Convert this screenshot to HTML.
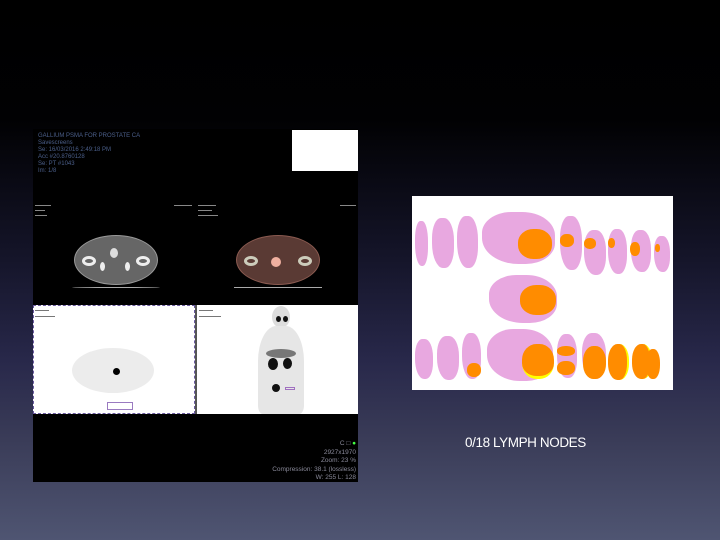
<!DOCTYPE html>
<html><head><meta charset="utf-8"><style>
*{margin:0;padding:0;box-sizing:border-box}
body{width:720px;height:540px;overflow:hidden;position:relative;font-family:"Liberation Sans",sans-serif;
background:linear-gradient(to bottom,#000 0px,#010103 120px,#15152a 260px,#28284a 360px,#3a3c58 440px,#4f5572 540px);}
.a{position:absolute}
.ct{position:absolute;border-radius:50%}
.txt{color:#4b5f8a;font-size:6px;line-height:7px;white-space:nowrap}
.sm{position:absolute;background:#888;height:1px}
.pk{position:absolute;background:#e8a8e0;border-radius:40% 45% 40% 50%}
.or{position:absolute;background:#ff8c00;border-radius:45%}
</style></head><body>
<div class="a" style="left:33px;top:129px;width:325px;height:353px;background:#000"></div>
<div class="a txt" style="left:38px;top:133px">GALLIUM PSMA FOR PROSTATE CA<br>Savescreens<br>Se: 16/03/2016 2:49:18 PM<br>Acc #20.8760128<br>Se: PT #1043<br>Im: 1/8</div>
<div class="a" style="left:292px;top:130px;width:66px;height:41px;background:#fff"></div>
<div class="ct" style="left:74px;top:235px;width:84px;height:50px;background:#666;border:1px solid #999"></div>
<div class="ct" style="left:82px;top:256px;width:14px;height:10px;border:3px solid #eee"></div>
<div class="ct" style="left:136px;top:256px;width:14px;height:10px;border:3px solid #eee"></div>
<div class="ct" style="left:110px;top:248px;width:8px;height:10px;background:#ddd"></div>
<div class="ct" style="left:100px;top:262px;width:5px;height:9px;background:#eee"></div>
<div class="ct" style="left:125px;top:262px;width:5px;height:9px;background:#eee"></div>
<div class="a" style="left:72px;top:287px;width:88px;height:1px;background:#aaa;border-radius:50%"></div>
<div class="ct" style="left:236px;top:235px;width:84px;height:50px;background:#5a3a34;border:1px solid #8a5a50"></div>
<div class="ct" style="left:244px;top:256px;width:14px;height:10px;border:3px solid #ccb"></div>
<div class="ct" style="left:298px;top:256px;width:14px;height:10px;border:3px solid #ccb"></div>
<div class="ct" style="left:271px;top:257px;width:10px;height:10px;background:#f0b0a0"></div>
<div class="a" style="left:234px;top:287px;width:88px;height:1px;background:#aaa"></div>
<div class="a" style="left:33px;top:305px;width:162px;height:109px;background:#fff;border:1px dashed #6a5aa0"></div>
<div class="a" style="left:197px;top:305px;width:161px;height:109px;background:#fff"></div>
<div class="a" style="left:195px;top:305px;width:2px;height:109px;background:#555"></div>
<div class="ct" style="left:72px;top:348px;width:82px;height:45px;background:#ececec"></div>
<div class="ct" style="left:113px;top:368px;width:7px;height:7px;background:#000"></div>
<div class="a" style="left:107px;top:402px;width:26px;height:8px;border:1px solid #9a7ac0"></div>
<div class="ct" style="left:272px;top:306px;width:18px;height:22px;background:#ddd"></div>
<div class="a" style="left:258px;top:326px;width:46px;height:88px;background:#e6e6e6;border-radius:40% 40% 10% 10%"></div>
<div class="ct" style="left:276px;top:316px;width:5px;height:6px;background:#111"></div>
<div class="ct" style="left:283px;top:316px;width:5px;height:6px;background:#111"></div>
<div class="ct" style="left:266px;top:349px;width:30px;height:9px;background:#777"></div>
<div class="ct" style="left:268px;top:358px;width:10px;height:12px;background:#111"></div>
<div class="ct" style="left:283px;top:358px;width:9px;height:11px;background:#111"></div>
<div class="ct" style="left:272px;top:384px;width:8px;height:8px;background:#111"></div>
<div class="a" style="left:285px;top:387px;width:10px;height:3px;border:1px solid #a070c0"></div>
<div class="sm" style="left:35px;top:205px;width:16px"></div><div class="sm" style="left:35px;top:210px;width:10px"></div><div class="sm" style="left:35px;top:215px;width:12px"></div>
<div class="sm" style="left:198px;top:205px;width:18px"></div><div class="sm" style="left:198px;top:210px;width:14px"></div><div class="sm" style="left:198px;top:215px;width:20px"></div>
<div class="sm" style="left:174px;top:205px;width:18px"></div><div class="sm" style="left:340px;top:205px;width:16px"></div>
<div class="sm" style="left:35px;top:310px;width:14px;background:#777"></div><div class="sm" style="left:35px;top:316px;width:20px;background:#777"></div>
<div class="sm" style="left:199px;top:310px;width:14px;background:#777"></div><div class="sm" style="left:199px;top:316px;width:22px;background:#777"></div>
<div class="a txt" style="right:364px;top:440px;text-align:right;color:#8a8a9a;line-height:8.5px;font-size:6.5px">C &#9633; <span style="color:#4f4">&#9679;</span><br>2927x1970<br>Zoom: 23 %<br>Compression: 38.1 (lossless)<br>W: 255 L: 128</div>
<div class="a" style="left:412px;top:196px;width:261px;height:194px;background:#fff;overflow:hidden">
<div class="pk" style="left:3px;top:25px;width:13px;height:45px"></div>
<div class="pk" style="left:20px;top:22px;width:22px;height:50px"></div>
<div class="pk" style="left:45px;top:20px;width:21px;height:52px"></div>
<div class="pk" style="left:70px;top:16px;width:73px;height:52px"></div>
<div class="or" style="left:106px;top:33px;width:34px;height:30px"></div>
<div class="pk" style="left:148px;top:20px;width:22px;height:54px"></div>
<div class="or" style="left:148px;top:38px;width:14px;height:13px"></div>
<div class="pk" style="left:172px;top:34px;width:22px;height:45px"></div>
<div class="or" style="left:172px;top:42px;width:12px;height:11px"></div>
<div class="pk" style="left:196px;top:33px;width:19px;height:45px"></div>
<div class="or" style="left:196px;top:42px;width:7px;height:10px"></div>
<div class="pk" style="left:219px;top:34px;width:20px;height:42px"></div>
<div class="or" style="left:218px;top:46px;width:10px;height:14px"></div>
<div class="pk" style="left:242px;top:40px;width:16px;height:36px"></div>
<div class="or" style="left:243px;top:48px;width:5px;height:8px"></div>
<div class="pk" style="left:77px;top:79px;width:68px;height:48px"></div>
<div class="or" style="left:108px;top:89px;width:36px;height:30px"></div>
<div class="pk" style="left:3px;top:143px;width:18px;height:40px"></div>
<div class="pk" style="left:25px;top:140px;width:22px;height:44px"></div>
<div class="pk" style="left:50px;top:137px;width:19px;height:46px"></div>
<div class="or" style="left:55px;top:167px;width:14px;height:14px"></div>
<div class="pk" style="left:75px;top:133px;width:66px;height:52px"></div>
<div class="or" style="left:110px;top:148px;width:32px;height:35px;border-bottom:3px solid #ff0"></div>
<div class="pk" style="left:145px;top:138px;width:20px;height:44px"></div>
<div class="or" style="left:145px;top:150px;width:18px;height:10px"></div>
<div class="or" style="left:145px;top:165px;width:18px;height:14px"></div>
<div class="pk" style="left:170px;top:137px;width:24px;height:46px"></div>
<div class="or" style="left:171px;top:150px;width:23px;height:33px"></div>
<div class="or" style="left:196px;top:148px;width:21px;height:36px;border-right:2px solid #ff0"></div>
<div class="or" style="left:220px;top:148px;width:20px;height:35px;border-right:2px solid #ff0"></div>
<div class="or" style="left:234px;top:153px;width:14px;height:30px"></div>
</div>
<div class="a" style="left:465px;top:435px;color:#fff;font-size:13.5px;letter-spacing:-0.4px;white-space:nowrap">0/18 LYMPH NODES</div>
</body></html>
